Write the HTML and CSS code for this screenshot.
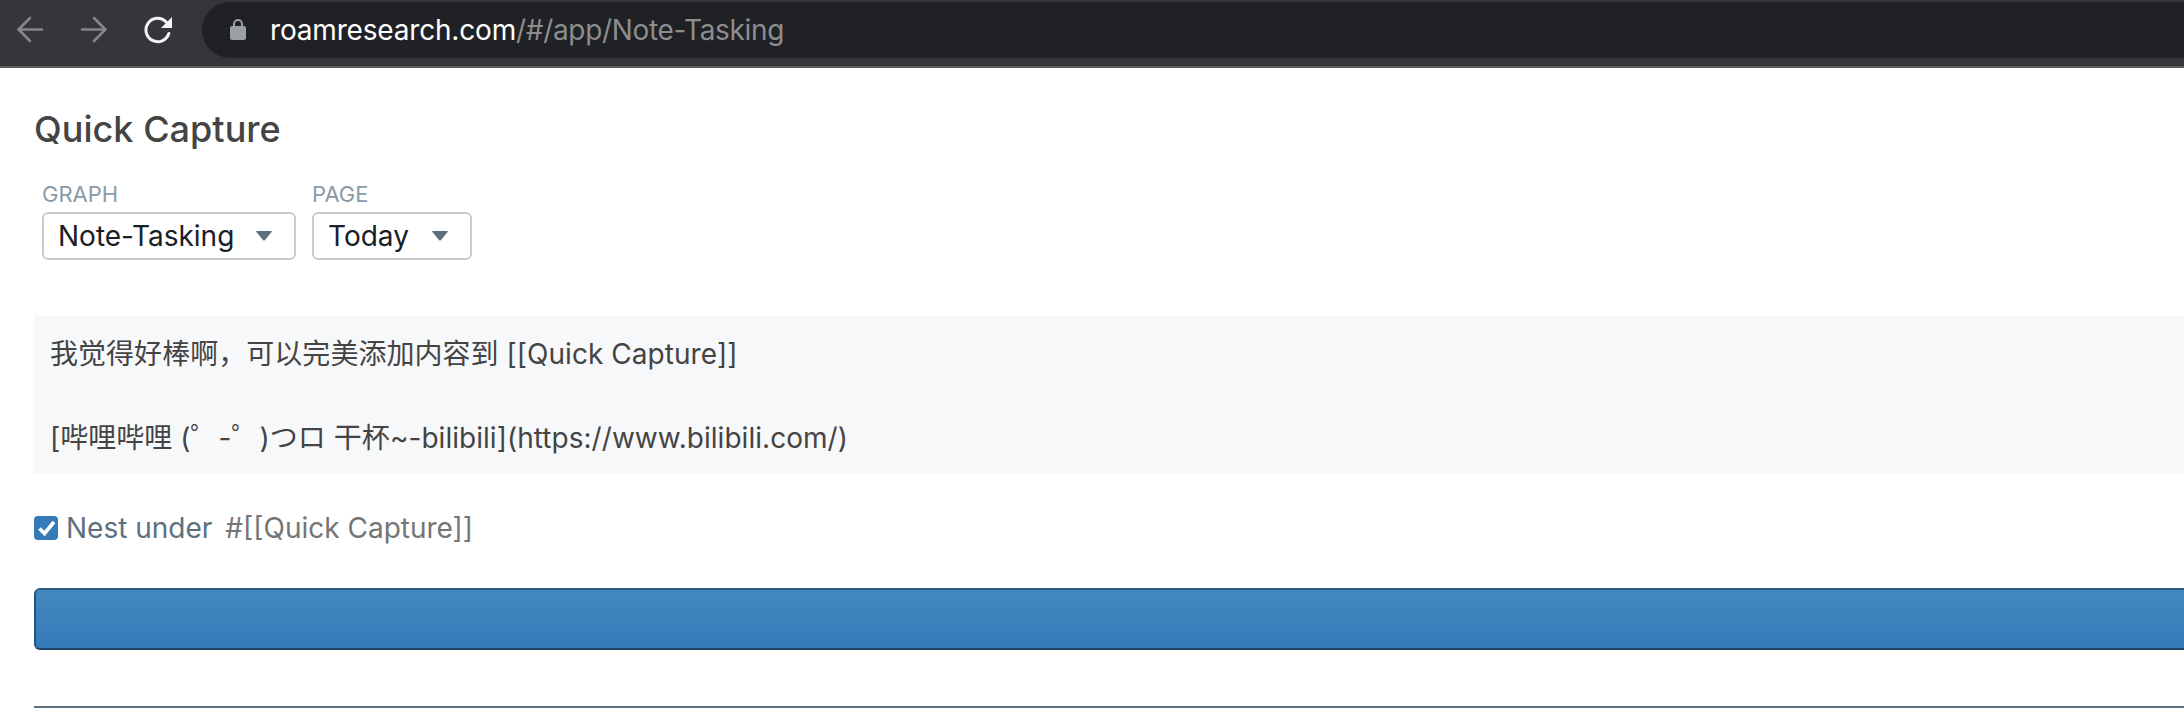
FILE: index.html
```html
<!DOCTYPE html>
<html lang="zh-CN">
<head>
<meta charset="utf-8">
<title>Quick Capture</title>
<link rel="stylesheet" href="styles.css">
</head>
<body>
<header class="toolbar">
  <svg class="nav-icon" viewBox="0 0 28 28"><path d="M26 13.500H2.500M14 2L2.500 13.500l11.500 11.500"/></svg>
  <svg class="nav-icon" viewBox="0 0 28 28"><path d="M2 13.500h23.500M14 2l11.500 11.500L14 25"/></svg>
  <svg class="nav-icon reload" viewBox="0 0 28 28"><path d="M24.800 17.500A11.700 11.700 0 1 1 22 5.800"/><path class="tip" d="M28 1v11H17z"/></svg>
  <div class="address">
    <svg class="lock" viewBox="0 0 16 22"><path class="shackle" d="M4 9V5a4 4 0 0 1 8 0v4"/><rect y="7" width="16" height="14" rx="2"/></svg>
    <span class="url">roamresearch.com<span class="path">/#/app/Note-Tasking</span></span>
  </div>
</header>
<main class="page">
  <h1 class="title">Quick Capture</h1>
  <div class="fields">
    <div class="field">
      <span class="label">GRAPH</span>
      <button class="select graph"><span>Note-Tasking</span><svg class="caret" viewBox="0 0 16 10"><path d="M1 0h14q1.500 0 .7 1L9 9q-1 1-2 0L.3 1Q-.5 0 1 0z"/></svg></button>
    </div>
    <div class="field">
      <span class="label">PAGE</span>
      <button class="select today"><span>Today</span><svg class="caret" viewBox="0 0 16 10"><path d="M1 0h14q1.500 0 .7 1L9 9q-1 1-2 0L.3 1Q-.5 0 1 0z"/></svg></button>
    </div>
  </div>
  <div class="note">
    <p><span>我觉得好棒啊，可以完美添加内容到 [[Quick Capture]]</span></p>
    <p><br></p>
    <p><span>[哔哩哔哩 (゜-゜)つロ 干杯~-bilibili](https://www.bilibili.com/)</span></p>
  </div>
  <div class="nest">
    <svg class="check" viewBox="0 0 24 24"><rect width="24" height="24" rx="4"/><path d="M5.500 12.500l5 5L20 6"/></svg>
    <span class="nest-label">Nest under</span>
    <span class="nest-tag">#[[Quick Capture]]</span>
  </div>
  <div class="submit"></div>
  <div class="rule"></div>
</main>
</body>
</html>
```
FILE: styles.css
```css
* { box-sizing: border-box; }
body {
  margin: 0;
  height: 720px;
  overflow: hidden;
  background: #fff;
  color: #444;
  font-family: Inter, "Noto Sans CJK SC", sans-serif;
  font-size: 28px;
  line-height: 42px;
}
.toolbar {
  display: flex;
  align-items: flex-start;
  height: 68px;
  padding: 2px 0 0 16px;
  background: #35363a;
  border-bottom: 2px solid #5f5c60;
}
.nav-icon {
  width: 28px;
  height: 28px;
  margin: 14px 36px 0 0;
  fill: none;
  stroke: #878789;
  stroke-width: 2.6;
  stroke-linecap: round;
}
.reload { margin-right: 30px; stroke: #f1f3f4; stroke-width: 3; }
.tip { fill: #f1f3f4; stroke: none; }
.address {
  flex: 1;
  display: flex;
  align-items: center;
  gap: 24px;
  height: 56px;
  padding-left: 28px;
  border-radius: 28px 0 0 28px;
  background: #202124;
}
.lock { width: 16px; height: 22px; fill: #9aa0a6; }
.shackle { fill: none; stroke: #9aa0a6; stroke-width: 2; }
.url { color: #fff; letter-spacing: -0.18px; white-space: nowrap; }
.path { color: #8c8d8f; letter-spacing: -0.33px; }
.page { padding: 40px 0 0 34px; }
.title { margin: 0; font-size: 36px; line-height: 42px; font-weight: 500; letter-spacing: 0.04px; }
.fields { display: flex; gap: 16px; padding: 28px 0 0 8px; }
.label { display: block; margin-bottom: 2px; color: #8a9ba8; font-size: 22px; line-height: 32px; }
.select {
  display: flex;
  align-items: center;
  justify-content: space-between;
  height: 48px;
  padding: 0 22px 0 14px;
  border: 2px solid #ccc;
  border-radius: 6px;
  background: #fff;
  color: #182026;
  font: inherit;
}
.graph { width: 254px; }
.today { width: 160px; }
.caret { width: 16px; height: 10px; fill: #5c7080; }
.note { height: 158px; margin-top: 56px; padding: 17px 16px 15px; background: #f7f8fa; }
.note p { margin: 0; height: 42px; letter-spacing: 0.04px; white-space: nowrap; }
.nest { display: flex; align-items: center; height: 42px; margin-top: 33px; }
.check { width: 24px; height: 24px; margin-right: 8px; fill: #367ab8; }
.check path { fill: none; stroke: #fff; stroke-width: 3.6; }
.nest-label { margin-right: 13px; color: #5c7080; }
.nest-tag { color: #757575; }
.submit {
  height: 62px;
  margin-top: 39px;
  border: 2px solid #24527a;
  border-color: #2a5b81 #24527a #1f4468;
  border-right: 0;
  border-radius: 6px 0 0 6px;
  background: linear-gradient(#4389bf, #367ab9);
}
.rule { height: 2px; margin-top: 56px; background: #5c7080; }
```
